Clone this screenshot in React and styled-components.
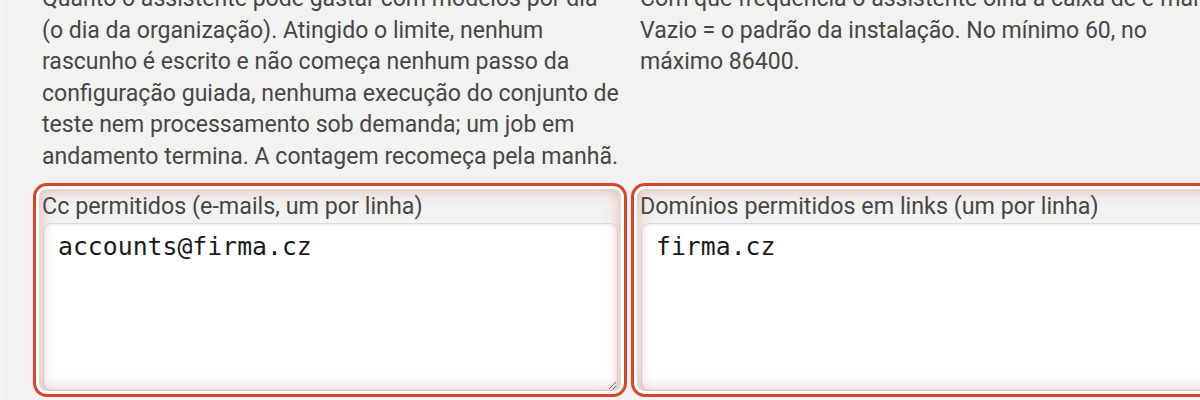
import React from 'react';
import styled, { createGlobalStyle } from 'styled-components';

const GlobalStyle = createGlobalStyle`
    html, body {
        margin: 0;
        padding: 0;
        background: #f6f6f5;
        overflow: hidden;
    }
    body {
        font-family: Roboto, 'Noto Sans', sans-serif;
    }
`;

const Panel = styled.div`
    margin-left: 8px;
    margin-top: -17px;
    padding: 0 0 40px 34px;
    background: #f2f2f0;
    box-shadow: -2px 0 6px rgba(0, 0, 0, 0.04);
    min-height: 460px;
`;

const Grid = styled.div`
    display: grid;
    grid-template-columns: 576px 576px;
    column-gap: 22px;
    row-gap: 17px;
`;

const Help = styled.p`
    margin: 0 -4px 0 0;
    font-size: 23.05px;
    line-height: 31.5px;
    color: #464646;
`;

const Field = styled.label`
    position: relative;
    display: flex;
    flex-direction: column;
    gap: 3px;
    padding: 3px 0 0;
    height: 199px;
    color: #464646;
    font-size: 23.3px;
    line-height: 28px;

    &::after {
        content: '';
        position: absolute;
        top: -6px;
        left: -9px;
        right: -9px;
        bottom: -6px;
        border: 3px solid #d8462a;
        border-radius: 14px;
        box-shadow: inset 0 0 0 3px #ffffff,
            inset 0 0 14px 5px rgba(190, 110, 100, 0.38);
        pointer-events: none;
    }
`;

const LabelText = styled.span`
    white-space: nowrap;
`;

const Area = styled.textarea`
    flex: 1;
    margin-left: 1px;
    padding: 8px 14px;
    border: 1px solid #dcdcdc;
    border-radius: 8px;
    background: #ffffff;
    color: #1a1a1a;
    font-family: 'DejaVu Sans Mono', 'Liberation Mono', monospace;
    font-size: 24.8px;
    line-height: 30px;
    box-shadow: inset 0 1px 3px rgba(0, 0, 0, 0.08);
    outline: none;
    resize: vertical;
`;

const fields = [
    {
        help: 'Quanto o assistente pode gastar com modelos por dia (o dia da organização). Atingido o limite, nenhum rascunho é escrito e não começa nenhum passo da configuração guiada, nenhuma execução do conjunto de teste nem processamento sob demanda; um job em andamento termina. A contagem recomeça pela manhã.',
        label: 'Cc permitidos (e-mails, um por linha)',
        value: 'accounts@firma.cz',
    },
    {
        help: 'Com que frequência o assistente olha a caixa de e-mail. Vazio = o padrão da instalação. No mínimo 60, no máximo 86400.',
        label: 'Domínios permitidos em links (um por linha)',
        value: 'firma.cz',
    },
];

const App = () => {
    return (
        <>
            <GlobalStyle />
            <Panel>
                <Grid>
                    {fields.map((f) => (
                        <Help key={f.label + 'h'}>{f.help}</Help>
                    ))}
                    {fields.map((f) => (
                        <Field key={f.label}>
                            <LabelText>{f.label}</LabelText>
                            <Area defaultValue={f.value} spellCheck={false} />
                        </Field>
                    ))}
                </Grid>
            </Panel>
        </>
    );
};

export default App;
